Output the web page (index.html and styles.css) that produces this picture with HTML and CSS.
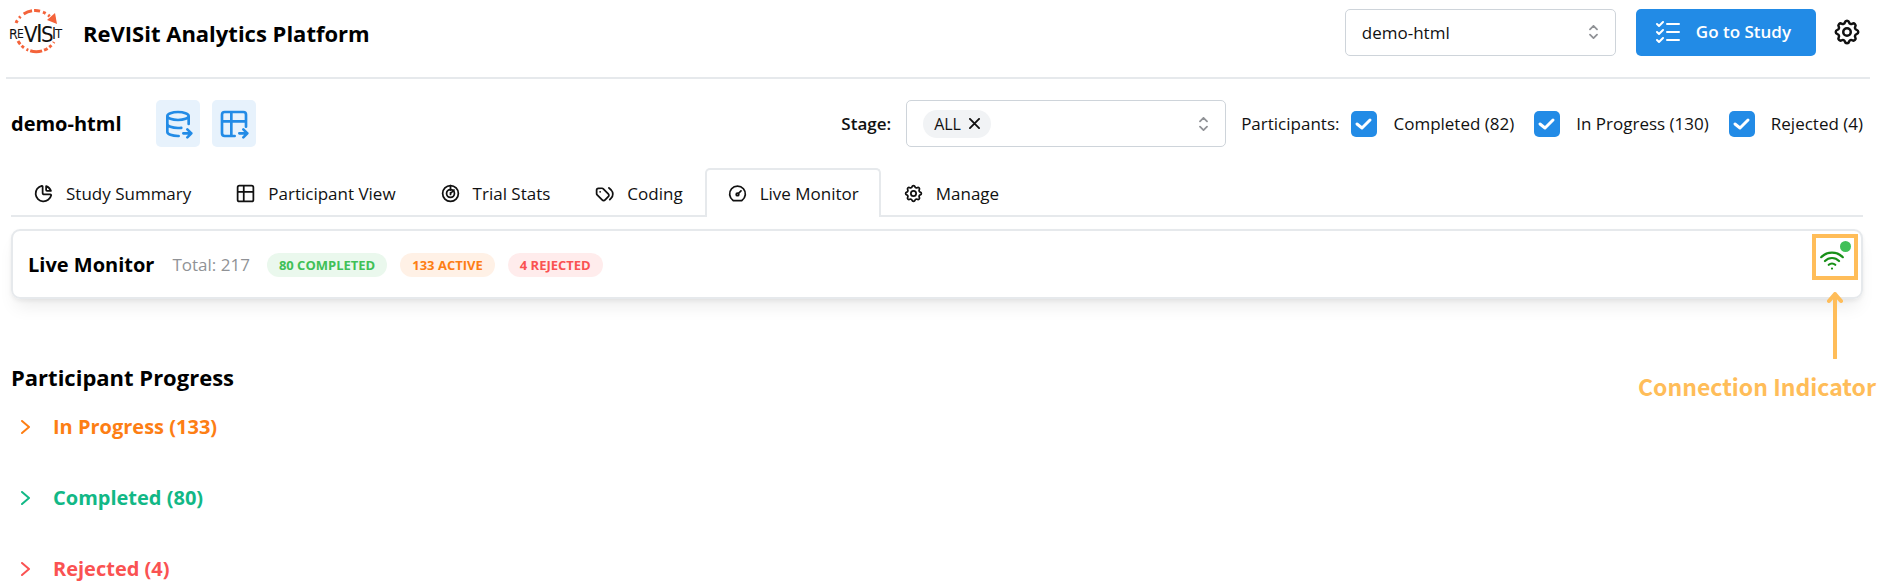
FILE: index.html
```html
<!DOCTYPE html>
<html lang="en">
<head>
  <meta charset="UTF-8" />
  <meta name="viewport" content="width=device-width, initial-scale=1.0" />
  <title>ReVISit Analytics Platform</title>
  <link rel="stylesheet" href="styles.css">
</head>
<body>
  <header class="header">
    <svg class="logo" viewBox="0 0 54 48" role="img" aria-label="reVISit">
      <g class="logo-ring">
        <path d="M7 15A21 21 0 0 1 43 11" stroke-dasharray="3 3 2 4 9 2 6 3" />
        <path d="M9 33A21 21 0 0 0 45 34" stroke-dasharray="4 2 3 3 2 2 12 2" />
      </g>
      <path class="logo-arrow" d="M38 12l8-7 2 11z" />
      <g class="logo-text">
        <text x="0" y="31" font-size="14">R</text>
        <text x="8" y="30" font-size="12">E</text>
        <text x="15" y="34" font-size="22">V</text>
        <text x="27" y="34" font-size="25">I</text>
        <text x="32" y="34" font-size="22">S</text>
        <text x="43" y="31" font-size="15">I</text>
        <text x="46" y="30" font-size="13">T</text>
      </g>
    </svg>
    <h1>ReVISit Analytics Platform</h1>
    <div class="select study-select">
      <select aria-label="Study">
        <option>demo-html</option>
      </select>
      <svg class="chevrons" viewBox="0 0 10 16"><path d="M1 5l4-4 4 4M1 11l4 4 4-4" /></svg>
    </div>
    <button class="go-btn" type="button">
      <svg class="go-icon" viewBox="0 0 24 24"><path d="M1 4l2 2 4-4M1 12l2 2 4-4M1 20l2 2 4-4M11 4h12M11 12h12M11 20h12" /></svg>
      Go to Study
    </button>
    <button class="gear-btn" type="button" aria-label="Settings">
      <svg class="icon" viewBox="0 0 24 24"><use href="#gear" /></svg>
    </button>
  </header>

  <main>
    <div class="toolbar">
      <h2>demo-html</h2>
      <button class="export-btn" type="button" aria-label="Download data">
        <svg class="icon" viewBox="0 0 24 24"><path d="M4 6c0 1.657 3.582 3 8 3s8-1.343 8-3-3.582-3-8-3-8 1.343-8 3M4 6v6c0 1.657 3.582 3 8 3 .86 0 1.690-.05 2.470-.145M20 12V6M4 12v6c0 1.657 3.582 3 8 3 .16 0 .32 0 .48-.005M16 19h6M19 16l3 3-3 3" /></svg>
      </button>
      <button class="export-btn" type="button" aria-label="Download table">
        <svg class="icon" viewBox="0 0 24 24"><path d="M12.500 21H5a2 2 0 0 1-2-2V5a2 2 0 0 1 2-2h14a2 2 0 0 1 2 2v9M3 10h18M10 3v18M16 19h6M19 16l3 3-3 3" /></svg>
      </button>

      <div class="filters">
        <label class="stage-label" for="stage">Stage:</label>
        <div class="select stage-select">
          <span class="pill">ALL
            <button type="button" aria-label="Remove ALL"><svg viewBox="0 0 12 12"><path d="M1 1l10 10M11 1L1 11" /></svg></button>
          </span>
          <input type="text" id="stage">
          <svg class="chevrons" viewBox="0 0 10 16"><path d="M1 5l4-4 4 4M1 11l4 4 4-4" /></svg>
        </div>
        <span class="participants">Participants:</span>
        <label class="check"><input type="checkbox" checked> Completed (82)</label>
        <label class="check"><input type="checkbox" checked> In Progress (130)</label>
        <label class="check"><input type="checkbox" checked> Rejected (4)</label>
      </div>
    </div>

    <nav class="tabs" role="tablist">
      <button type="button" role="tab">
        <svg class="icon" viewBox="0 0 24 24"><path d="M10 3.200A9 9 0 1 0 20.800 14a1 1 0 0 0-1-1H13a2 2 0 0 1-2-2V4a.9.9 0 0 0-1-.8M15 3.500A9 9 0 0 1 20.500 9H16a1 1 0 0 1-1-1V3.500" /></svg>
        Study Summary
      </button>
      <button type="button" role="tab">
        <svg class="icon" viewBox="0 0 24 24"><path d="M3 5a2 2 0 0 1 2-2h14a2 2 0 0 1 2 2v14a2 2 0 0 1-2 2H5a2 2 0 0 1-2-2zM3 10h18M10 3v18" /></svg>
        Participant View
      </button>
      <button type="button" role="tab">
        <svg class="icon" viewBox="0 0 24 24"><circle cx="12" cy="12" r="9" /><circle cx="12" cy="12" r="4.500" /><path d="M12 3v5M12 12l4-4M12 11v2" /></svg>
        Trial Stats
      </button>
      <button type="button" role="tab">
        <svg class="icon" viewBox="0 0 24 24"><path d="M3 8v4.200a2 2 0 0 0 .6 1.400l5.700 5.700a2.400 2.400 0 0 0 3.400 0l3.600-3.600a2.400 2.400 0 0 0 0-3.400l-5.700-5.700A2 2 0 0 0 9.200 6H5a2 2 0 0 0-2 2M18 19l1.600-1.600a6.700 6.700 0 0 0 0-9.400L17 5.500M7 10h.01" /></svg>
        Coding
      </button>
      <button class="active" type="button" role="tab" aria-selected="true">
        <svg class="icon" viewBox="0 0 24 24"><path d="M7 20a9 9 0 1 1 10 0zM13 12l3-3" /><circle cx="12" cy="13" r="1.500" /></svg>
        Live Monitor
      </button>
      <button type="button" role="tab">
        <svg class="icon" viewBox="0 0 24 24"><use href="#gear" /></svg>
        Manage
      </button>
    </nav>

    <section class="monitor">
      <h2>Live Monitor</h2>
      <span class="total">Total: 217</span>
      <span class="badge green">80 COMPLETED</span>
      <span class="badge orange">133 ACTIVE</span>
      <span class="badge red">4 REJECTED</span>
      <div class="connection">
        <svg class="icon wifi" viewBox="0 0 24 24"><path d="M12 19h.01M9 15.500a4.500 4.500 0 0 1 6 0M5.500 12a9 9 0 0 1 13 0M2 8.500a14 14 0 0 1 20 0" /></svg>
        <span class="dot"></span>
        <div class="callout">
          <svg class="arrow" viewBox="0 0 16 68"><path d="M8 67V3M2 10l6-7 6 7" /></svg>
          <span>Connection Indicator</span>
        </div>
      </div>
    </section>

    <section class="progress">
      <h2>Participant Progress</h2>
      <button class="group in-progress" type="button">
        <svg viewBox="0 0 10 14"><path d="M1 1l7 6-7 6" /></svg>
        In Progress (133)
      </button>
      <button class="group completed" type="button">
        <svg viewBox="0 0 10 14"><path d="M1 1l7 6-7 6" /></svg>
        Completed (80)
      </button>
      <button class="group rejected" type="button">
        <svg viewBox="0 0 10 14"><path d="M1 1l7 6-7 6" /></svg>
        Rejected (4)
      </button>
    </section>
  </main>

  <svg class="defs" aria-hidden="true">
    <symbol id="gear" viewBox="0 0 24 24">
      <path d="M10.325 4.317c.426-1.756 2.924-1.756 3.350 0a1.724 1.724 0 0 0 2.573 1.066c1.543-.94 3.310.826 2.370 2.370a1.724 1.724 0 0 0 1.065 2.572c1.756.426 1.756 2.924 0 3.350a1.724 1.724 0 0 0-1.066 2.573c.94 1.543-.826 3.310-2.370 2.370a1.724 1.724 0 0 0-2.572 1.065c-.426 1.756-2.924 1.756-3.350 0a1.724 1.724 0 0 0-2.573-1.066c-1.543.94-3.310-.826-2.370-2.370a1.724 1.724 0 0 0-1.065-2.572c-1.756-.426-1.756-2.924 0-3.350a1.724 1.724 0 0 0 1.066-2.573c-.94-1.543.826-3.310 2.370-2.370 1 .608 2.296.07 2.572-1.065z" />
      <circle cx="12" cy="12" r="3" />
    </symbol>
  </svg>
</body>
</html>
```

FILE: styles.css
```css
:root {
  --blue: #228be6;
  --line: #e6e9ec;
  --border: #ced4da;
  --note: #ffbd59;
}
* {
  box-sizing: border-box;
}
body {
  margin: 0;
  font-family: "Open Sans", "Noto Sans", sans-serif;
  font-size: 17px;
  line-height: 24px;
  color: #111;
  background: #fff;
  overflow-x: hidden;
}
h1, h2 {
  margin: 0;
  color: #000;
  font-weight: bold;
}
button, input, select {
  font: inherit;
  color: inherit;
}
button {
  background: none;
  border: none;
  padding: 0;
  cursor: pointer;
}
svg {
  display: block;
  flex: none;
  fill: none;
  stroke: currentColor;
  stroke-width: 2;
  stroke-linecap: round;
  stroke-linejoin: round;
}
.defs {
  display: none;
}

/* header */
.header {
  display: flex;
  align-items: center;
  height: 79px;
  margin: 0 11px 0 6px;
  padding: 0 8px 13px 3px;
  border-bottom: 2px solid var(--line);
}
.logo {
  width: 54px;
  height: 48px;
}
.logo-ring {
  stroke: #f4633a;
  stroke-width: 3;
  stroke-linecap: butt;
}
.logo-arrow {
  fill: #f4633a;
  stroke: none;
}
.logo-text {
  fill: #111;
  stroke: none;
  font-family: "DejaVu Sans Condensed", "Open Sans", sans-serif;
}
.header h1 {
  margin: 2px auto 0 20px;
  font-size: 22px;
  line-height: 28px;
}
.select {
  position: relative;
  display: flex;
  align-items: center;
  height: 47px;
  border: 1px solid var(--border);
  border-radius: 5px;
}
.select .chevrons {
  position: absolute;
  right: 17px;
  width: 9px;
  height: 14px;
  color: #909296;
}
.study-select {
  width: 271px;
}
.study-select select {
  width: 100%;
  height: 100%;
  padding: 2px 16px 0;
  border: none;
  background: none;
  appearance: none;
}
.study-select .chevrons {
  pointer-events: none;
}
.go-btn {
  display: flex;
  align-items: center;
  gap: 16px;
  height: 47px;
  margin: 0 16px 0 20px;
  padding: 0 25px 0 20px;
  border-radius: 5px;
  background: var(--blue);
  color: #fff;
  font-weight: 600;
}
.go-icon {
  width: 24px;
  height: 24px;
}
.gear-btn .icon {
  width: 30px;
  height: 30px;
}

/* study toolbar */
main {
  padding: 0 18px 0 11px;
}
.toolbar {
  display: flex;
  align-items: center;
  gap: 12px;
  padding: 21px 0;
}
.toolbar h2 {
  margin-right: 22px;
  font-size: 20px;
}
.export-btn {
  display: grid;
  place-items: center;
  width: 44px;
  height: 47px;
  border-radius: 5px;
  background: #e7f2fc;
  color: var(--blue);
}
.export-btn .icon {
  width: 32px;
  height: 32px;
}
.filters {
  display: flex;
  align-items: center;
  margin-left: auto;
}
.stage-label {
  margin-right: 15px;
  font-weight: 600;
}
.stage-select {
  width: 320px;
  padding: 0 40px 0 16px;
}
.stage-select input {
  flex: 1;
  min-width: 0;
  border: none;
  outline: none;
  background: none;
}
.pill {
  display: flex;
  align-items: center;
  gap: 8px;
  height: 28px;
  padding: 0 11px;
  border-radius: 14px;
  background: #f1f3f5;
  font-size: 16px;
}
.pill svg {
  width: 11px;
  height: 11px;
}
.participants {
  margin-left: 15px;
}
.check {
  display: flex;
  align-items: center;
  gap: 16px;
  margin-left: 12px;
}
.check + .check {
  margin-left: 20px;
}
.check input {
  width: 26px;
  height: 26px;
  margin: 0;
  border-radius: 5px;
  appearance: none;
}
.check input:checked {
  background: var(--blue) url("data:image/svg+xml,%3Csvg xmlns='http://www.w3.org/2000/svg' viewBox='0 0 26 26'%3E%3Cpath d='M6 13l5 4 8-8' fill='none' stroke='white' stroke-width='3' stroke-linecap='round' stroke-linejoin='round'/%3E%3C/svg%3E");
}

/* tabs */
.tabs {
  display: flex;
  height: 49px;
  box-shadow: inset 0 -2px var(--line);
}
.tabs button {
  display: flex;
  align-items: center;
  gap: 12px;
  padding: 0 20px;
  border: 2px solid transparent;
  border-bottom: none;
}
.tabs .icon {
  width: 21px;
  height: 21px;
}
.tabs .active {
  border-color: var(--line);
  border-radius: 5px 5px 0 0;
  background: #fff;
}

/* live monitor */
.monitor {
  display: flex;
  align-items: center;
  height: 70px;
  margin-top: 12px;
  padding: 2px 8px 0 15px;
  border: 2px solid var(--line);
  border-radius: 9px;
  box-shadow: 0 2px 4px rgba(0, 0, 0, 0.06), 0 12px 18px -5px rgba(0, 0, 0, 0.08);
}
.monitor h2 {
  margin-right: 18px;
  font-size: 20px;
}
.total {
  margin-right: 17px;
  color: #909296;
}
.badge {
  margin-right: 13px;
  padding: 0 12px;
  border-radius: 12px;
  font-size: 13px;
  font-weight: bold;
}
.green {
  color: #40c057;
  background: #eaf8ed;
}
.orange {
  color: #fd7e14;
  background: #fff1e6;
}
.red {
  color: #fa5252;
  background: #ffecec;
}
.connection {
  position: relative;
  align-self: flex-start;
  width: 46px;
  height: 46px;
  margin: 1px -5px 0 auto;
  border: 4px solid var(--note);
}
.wifi {
  width: 26px;
  height: 26px;
  margin: 10px 0 0 3px;
  color: #189018;
}
.dot {
  position: absolute;
  top: 3px;
  right: 3px;
  width: 11px;
  height: 11px;
  border-radius: 50%;
  background: #40c057;
}
.callout {
  position: absolute;
  top: 53px;
  right: -22px;
  color: var(--note);
  font-family: "Noto Sans CJK SC", sans-serif;
  font-size: 23px;
  font-weight: bold;
  line-height: 32px;
  white-space: nowrap;
}
.callout .arrow {
  width: 16px;
  height: 68px;
  margin: 0 33px 11px auto;
  stroke-width: 4;
}

/* participant progress */
.progress {
  display: flex;
  flex-direction: column;
  align-items: flex-start;
  padding-top: 64px;
}
.progress h2 {
  font-size: 22px;
  line-height: 28px;
}
.group {
  display: flex;
  align-items: center;
  gap: 22px;
  height: 71px;
  padding: 0 10px;
  font-size: 20px;
  font-weight: bold;
}
.group svg {
  width: 10px;
  height: 14px;
}
.in-progress {
  color: #fd7e14;
}
.completed {
  color: #12b886;
}
.rejected {
  color: #fa5252;
}
```
